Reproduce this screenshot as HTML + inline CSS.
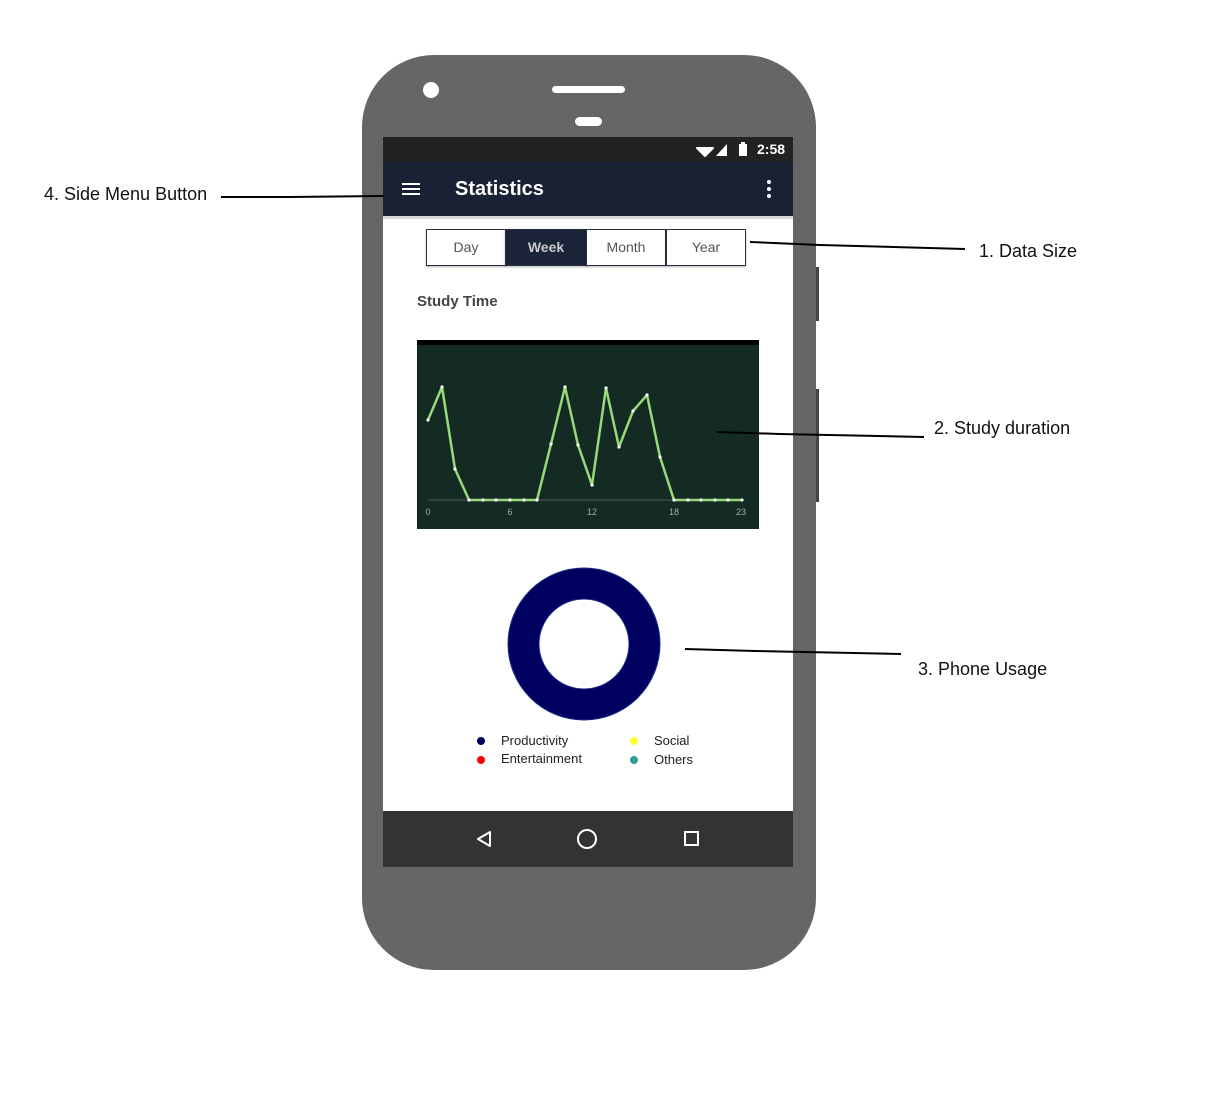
<!DOCTYPE html>
<html><head><meta charset="utf-8"><style>
body{margin:0;width:1213px;height:1099px;background:#fff;position:relative;overflow:hidden;font-family:"Liberation Sans",sans-serif}
.a{position:absolute}
.ann{position:absolute;font-size:18px;color:#111}
.tab{position:absolute;top:229px;height:35px;border:1px solid #2a3040;background:#fff;color:#555;font-size:14px;line-height:35px;text-align:center;box-shadow:0 1px 2px rgba(0,0,0,.3)}
.lg{position:absolute;font-size:13px;color:#222}
.dot{position:absolute;width:8px;height:8px;border-radius:50%}
</style></head><body>
<svg class="a" style="left:0;top:0" width="1213" height="1099">
<rect x="362" y="55" width="454" height="915" rx="72" fill="#666"/>
<rect x="816" y="267" width="3" height="54" fill="#444"/>
<rect x="816" y="389" width="3" height="113" fill="#444"/>
<circle cx="431" cy="90" r="8" fill="#fff"/>
<rect x="552" y="86" width="73" height="7" rx="3.5" fill="#fff"/>
<rect x="575" y="117" width="27" height="9" rx="4.5" fill="#fff"/>
<rect x="383" y="137" width="410" height="730" fill="#fff"/>
<rect x="383" y="137" width="410" height="25" fill="#222"/>
<rect x="383" y="162" width="410" height="54" fill="#1b2135"/>
<rect x="383" y="216" width="410" height="3" fill="#d8d8d8"/>
<rect x="383" y="811" width="410" height="56" fill="#333"/>
<!-- status icons -->
<path d="M697 148 L713 148 L705 156 Z" fill="#fff" stroke="#fff" stroke-width="2" stroke-linejoin="round"/>
<path d="M716 156 L727 144 L727 156 Z" fill="#fff"/>
<rect x="739" y="144" width="8" height="12" fill="#fff"/><rect x="741" y="142" width="4" height="2" fill="#fff"/>
<!-- hamburger -->
<rect x="402" y="183" width="18" height="2" fill="#fff"/><rect x="402" y="188" width="18" height="2" fill="#fff"/><rect x="402" y="193" width="18" height="2" fill="#fff"/>
<circle cx="769" cy="182" r="2" fill="#fff"/><circle cx="769" cy="189" r="2" fill="#fff"/><circle cx="769" cy="196" r="2" fill="#fff"/>
<!-- chart -->
<rect x="417" y="340" width="342" height="189" fill="#142b23"/>
<rect x="417" y="340" width="342" height="5" fill="#000"/>
<line x1="428" y1="500" x2="743" y2="500" stroke="#556" stroke-width="1"/>
<polyline fill="none" stroke="#98d97a" stroke-width="2.5" stroke-linejoin="round" points="428,420 442,387 455,469 469,500 483,500 496,500 510,500 524,500 537,500 551,444 565,387 578,445 592,485 606,388 619,447 633,411 647,395 660,457 674,500 688,500 701,500 715,500 728,500 742,500"/>
<g fill="#fff">
<circle cx="428" cy="420" r="1.6"/><circle cx="442" cy="387" r="1.6"/><circle cx="455" cy="469" r="1.6"/><circle cx="469" cy="500" r="1.6"/><circle cx="483" cy="500" r="1.6"/><circle cx="496" cy="500" r="1.6"/><circle cx="510" cy="500" r="1.6"/><circle cx="524" cy="500" r="1.6"/><circle cx="537" cy="500" r="1.6"/><circle cx="551" cy="444" r="1.6"/><circle cx="565" cy="387" r="1.6"/><circle cx="578" cy="445" r="1.6"/><circle cx="592" cy="485" r="1.6"/><circle cx="606" cy="388" r="1.6"/><circle cx="619" cy="447" r="1.6"/><circle cx="633" cy="411" r="1.6"/><circle cx="647" cy="395" r="1.6"/><circle cx="660" cy="457" r="1.6"/><circle cx="674" cy="500" r="1.6"/><circle cx="688" cy="500" r="1.6"/><circle cx="701" cy="500" r="1.6"/><circle cx="715" cy="500" r="1.6"/><circle cx="728" cy="500" r="1.6"/><circle cx="742" cy="500" r="1.6"/>
</g>
<g fill="#aaa" font-size="9" font-family="Liberation Sans" text-anchor="middle">
<text x="428" y="515">0</text><text x="510" y="515">6</text><text x="592" y="515">12</text><text x="674" y="515">18</text><text x="741" y="515">23</text></g>
<!-- donut -->
<circle cx="584" cy="644" r="60.5" fill="none" stroke="#000060" stroke-width="31"/>
<circle cx="584" cy="644" r="76" fill="none" stroke="#1c2a80" stroke-width="1"/>
<circle cx="584" cy="644" r="45" fill="none" stroke="#1c2a80" stroke-width="1"/>
<!-- nav -->
<path d="M490 832 L478 839 L490 846 Z" fill="none" stroke="#fff" stroke-width="2" stroke-linejoin="round"/>
<circle cx="587" cy="839" r="9" fill="none" stroke="#fff" stroke-width="2"/>
<rect x="685" y="832" width="13" height="13" fill="none" stroke="#fff" stroke-width="2"/>
<!-- annotation lines -->
<g stroke="#000" stroke-width="2" fill="none">
<path d="M221 197 L290 197 L383 196"/>
<path d="M750 242 L820 245 L965 249"/>
<path d="M717 432 L780 434 L924 437"/>
<path d="M685 649 L755 651 L901 654"/>
</g>
</svg>
<div class="a" style="left:757px;top:141px;color:#fff;font-size:14px;font-weight:bold">2:58</div>
<div class="a" style="left:455px;top:178px;color:#fff;font-size:20px;font-weight:bold">Statistics</div>
<div class="tab" style="left:426px;width:78px">Day</div>
<div class="tab" style="left:505px;width:80px;background:#1b2438;color:#ccc;font-weight:bold">Week</div>
<div class="tab" style="left:586px;width:78px">Month</div>
<div class="tab" style="left:666px;width:78px">Year</div>
<div class="a" style="left:417px;top:293px;font-size:15px;font-weight:bold;color:#444">Study Time</div>
<div class="dot" style="left:477px;top:737px;background:#000060"></div>
<div class="dot" style="left:477px;top:756px;background:#f00"></div>
<div class="dot" style="left:630px;top:737px;background:#ff3"></div>
<div class="dot" style="left:630px;top:756px;background:#3a9a98"></div>
<div class="lg" style="left:501px;top:733px">Productivity</div>
<div class="lg" style="left:501px;top:751px">Entertainment</div>
<div class="lg" style="left:654px;top:733px">Social</div>
<div class="lg" style="left:654px;top:752px">Others</div>
<div class="ann" style="left:44px;top:184px">4. Side Menu Button</div>
<div class="ann" style="left:979px;top:241px">1. Data Size</div>
<div class="ann" style="left:934px;top:418px">2. Study duration</div>
<div class="ann" style="left:918px;top:659px">3. Phone Usage</div>
</body></html>
